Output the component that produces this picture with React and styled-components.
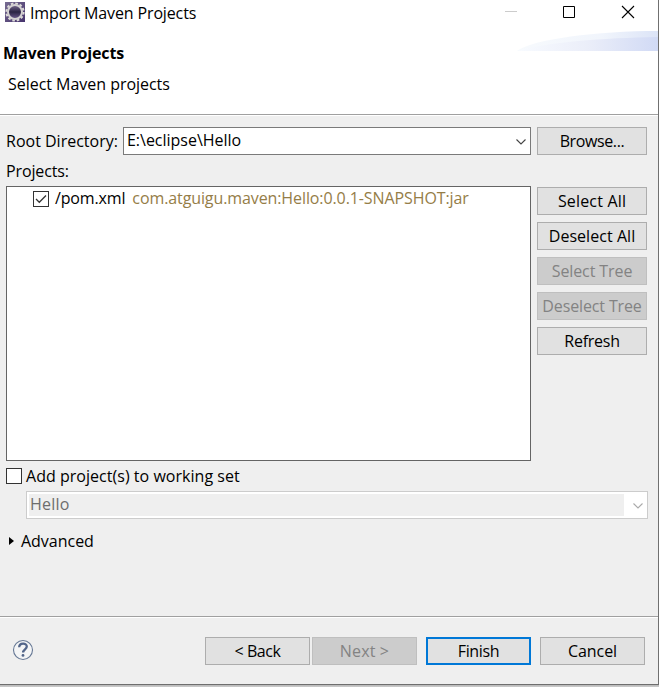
import React from "react";
import styled, { createGlobalStyle, css } from "styled-components";

const Global = createGlobalStyle`
  * { box-sizing: border-box; }
  html, body { margin: 0; overflow: hidden; background: #c8c8c8; }
  body { font: 16px/20px "Open Sans", "Noto Sans", sans-serif; color: #000; }
`;

const Desktop = styled.div`
  width: 659px;
  height: 687px;
  background: linear-gradient(#b8b8b8, #cdcdcd) bottom / 100% 2px no-repeat;
`;

const Dialog = styled.main`
  display: flex;
  flex-direction: column;
  width: 659px;
  height: 685px;
  background: #efefef;
  border-right: 1px solid #707070;
  border-bottom: 1px solid #6e6e6e;
`;

const Label = styled.span`
  white-space: pre;
  letter-spacing: ${(p) => p.$track || 0}px;
  color: ${(p) => p.$color || "inherit"};
`;

const Header = styled.header`
  height: 116px;
  flex: none;
  background: #fff;
  border-bottom: 1px solid #fff;
  box-shadow: inset 0 -1px #a0a0a0;
`;

const TitleBar = styled.div`
  display: flex;
  align-items: flex-start;
  height: 31px;
  padding: 2px 23px 0 5px;
`;

const WindowTitle = styled(Label)`
  margin: 1px 0 0 5px;
  flex: 1;
`;

const WindowControls = styled.div`
  display: flex;
  gap: 45px;
  padding-top: 3px;
`;

const Banner = styled.div`
  display: flex;
  justify-content: space-between;
`;

const BannerText = styled.div`
  display: flex;
  flex-direction: column;
  padding: 12px 0 0 3px;
`;

const Heading = styled.h1`
  margin: 0;
  font-size: 16px;
  line-height: 20px;
  letter-spacing: -0.11px;
`;

const Subheading = styled(Label)`
  margin: 11px 0 0 5px;
`;

const Content = styled.section`
  flex: 1;
  padding: 11px 10px 0 6px;
`;

const RootRow = styled.div`
  display: grid;
  grid-template-columns: 117px 408px 110px;
  align-items: center;
  & > :last-child { margin-left: 6px; }
`;

const ComboBox = styled.div`
  display: flex;
  align-items: center;
  justify-content: space-between;
  height: 28px;
  padding: 0 4px 2px 3px;
  background: #fff;
  border: 1px solid #7a7a7a;
  & > svg { margin-top: 3px; }
`;

const DisabledCombo = styled.div`
  display: flex;
  align-items: center;
  justify-content: space-between;
  width: 622px;
  height: 28px;
  margin: 5px 0 0 20px;
  padding: 2px 4px 2px 2px;
  background: #fff;
  border: 1px solid #ccc;
  & > svg { margin-top: 1px; }
`;

const DisabledValue = styled.div`
  width: 595px;
  height: 22px;
  padding-left: 1px;
  background: #efefef;
  color: #6d6d6d;
`;

const ProjectsLabel = styled.div`
  height: 31px;
  padding-top: 6px;
`;

const ProjectsArea = styled.div`
  display: flex;
  gap: 6px;
`;

const Tree = styled.div`
  width: 525px;
  height: 275px;
  padding: 1px 0 0 26px;
  background: #fff;
  border: 1px solid #646464;
`;

const TreeItem = styled.div`
  display: flex;
  align-items: flex-start;
`;

const ItemName = styled(Label)`
  margin: 0 7px 0 6px;
`;

const Checkbox = styled.span`
  display: flex;
  align-items: center;
  justify-content: center;
  flex: none;
  width: 16px;
  height: 16px;
  background: #fff;
  border: 1px solid #333;
`;

const ItemCheckbox = styled(Checkbox)`
  margin-top: 3px;
`;

const SideButtons = styled.div`
  display: flex;
  flex-direction: column;
  gap: 7px;
  padding-top: 1px;
`;

const Button = styled.button`
  display: flex;
  align-items: center;
  justify-content: center;
  width: ${(p) => p.$width || 110}px;
  height: 28px;
  padding: 0;
  font: inherit;
  color: #000;
  background: #e1e1e1;
  border: 1px solid #adadad;
  border-radius: 0;
  ${(p) => p.$primary && css`
    border: 2px solid #0078d7;
  `}
  &:disabled {
    color: #838383;
    background: #ccc;
    border-color: #bfbfbf;
  }
`;

const WorkingSet = styled.div`
  display: flex;
  align-items: center;
  gap: 4px;
  margin-top: 5px;
`;

const Advanced = styled.div`
  display: flex;
  align-items: center;
  gap: 7px;
  margin: 12px 0 0 3px;
`;

const Footer = styled.footer`
  display: flex;
  height: 68px;
  flex: none;
  padding: 19px 13px 0 12px;
  border-top: 1px solid #a0a0a0;
  box-shadow: inset 0 1px #fff;
  & > svg { margin-top: 3px; }
`;

const Navigation = styled.div`
  display: flex;
  gap: 2px;
  margin: 1px 9px 0 auto;
`;

const Actions = styled.div`
  display: flex;
  gap: 9px;
  margin-top: 1px;
`;

const AppIcon = () => (
  <svg width="20" height="20" viewBox="0 0 20 20">
    <defs>
      <linearGradient id="purple" x1="0" y1="0" x2="1" y2="1">
        <stop offset="0" stopColor="#776c91" />
        <stop offset="1" stopColor="#46336d" />
      </linearGradient>
      <linearGradient id="core" x1="0" y1="0" x2="0" y2="1">
        <stop offset="0" stopColor="#77688f" />
        <stop offset=".5" stopColor="#2b2444" />
        <stop offset="1" stopColor="#6e5b90" />
      </linearGradient>
    </defs>
    <path fill="url(#purple)" d="M0 0h20v20H0z" />
    <circle cx="10" cy="10" r="8.6" fill="none" stroke="#dddbd8" strokeWidth="2" strokeDasharray="2.6 1.903" />
    <circle cx="10" cy="10" r="7" fill="url(#core)" stroke="#d3d0d1" strokeWidth="2" />
  </svg>
);

const Swoosh = () => (
  <svg width="141" height="20" viewBox="0 0 141 20">
    <defs>
      <linearGradient id="wave">
        <stop offset="0" stopColor="#f8fbff" />
        <stop offset=".5" stopColor="#ebeef9" />
        <stop offset="1" stopColor="#d1daf5" />
      </linearGradient>
      <linearGradient id="crest">
        <stop offset="0" stopColor="#f7fafd" />
        <stop offset=".6" stopColor="#f1f5fc" />
        <stop offset="1" stopColor="#dce4f7" />
      </linearGradient>
    </defs>
    <path fill="url(#crest)" d="M0 20C16 8 80 0 141 0V20z" />
    <path fill="url(#wave)" d="M0 20C30 11 85 7 141 6V20z" />
  </svg>
);

const Chevron = ({ color }) => (
  <svg width="10" height="6" viewBox="0 0 10 6">
    <path fill="none" stroke={color} strokeWidth="1.1" d="M.5.5 5 5 9.5.5" />
  </svg>
);

const HelpIcon = () => (
  <svg width="22" height="22" viewBox="0 0 22 22">
    <circle cx="11" cy="11" r="9.5" fill="#f4f5f6" stroke="#667895" strokeWidth="1.1" />
    <path fill="none" stroke="#53668a" strokeWidth="2.3" d="M7.2 8.2C7.2 3.6 15 3.6 14.8 7.6c0 2.7-3.7 2.9-3.7 6" />
    <circle cx="11" cy="16.4" r="1.4" fill="#53668a" />
  </svg>
);

const sideButtons = [
  { text: "Select All", track: 0.17 },
  { text: "Deselect All", track: 0.05 },
  { text: "Select Tree", track: -0.1, disabled: true },
  { text: "Deselect Tree", track: -0.13, disabled: true },
  { text: "Refresh", track: -0.25 },
];

export default function App() {
  return (
    <Desktop>
      <Global />
      <Dialog>
        <Header>
          <TitleBar>
            <AppIcon />
            <WindowTitle $track={-0.14}>Import Maven Projects</WindowTitle>
            <WindowControls>
              <svg width="14" height="14"><path stroke="#ccc" d="M2 6.5h12" /></svg>
              <svg width="14" height="14"><path fill="none" stroke="#000" d="M1.5 1.5h11v11h-11z" /></svg>
              <svg width="14" height="14"><path stroke="#000" strokeWidth="1.1" d="m1 1 12 12M13 1 1 13" /></svg>
            </WindowControls>
          </TitleBar>
          <Banner>
            <BannerText>
              <Heading>Maven Projects</Heading>
              <Subheading $track={-0.03}>Select Maven projects</Subheading>
            </BannerText>
            <Swoosh />
          </Banner>
        </Header>
        <Content>
          <RootRow>
            <Label>Root Directory:</Label>
            <ComboBox>
              <Label $track={-0.02}>E:\eclipse\Hello</Label>
              <Chevron color="#444" />
            </ComboBox>
            <Button><Label $track={-0.38}>Browse...</Label></Button>
          </RootRow>
          <ProjectsLabel><Label $track={-0.13}>Projects:</Label></ProjectsLabel>
          <ProjectsArea>
            <Tree>
              <TreeItem>
                <ItemCheckbox>
                  <svg width="12" height="10" viewBox="0 0 12 10">
                    <path fill="none" stroke="#333" strokeWidth="1.3" d="m1 5 3.3 3.3L11 1.5" />
                  </svg>
                </ItemCheckbox>
                <ItemName $track={-0.15}>/pom.xml</ItemName>
                <Label $track={-0.1} $color="#957d47">com.atguigu.maven:Hello:0.0.1-SNAPSHOT:jar</Label>
              </TreeItem>
            </Tree>
            <SideButtons>
              {sideButtons.map(({ text, track, disabled }) => (
                <Button key={text} disabled={disabled}><Label $track={track}>{text}</Label></Button>
              ))}
            </SideButtons>
          </ProjectsArea>
          <WorkingSet>
            <Checkbox />
            <Label $track={0.03}>Add project(s) to working set</Label>
          </WorkingSet>
          <DisabledCombo>
            <DisabledValue><Label $track={0.2}>Hello</Label></DisabledValue>
            <Chevron color="#aaa" />
          </DisabledCombo>
          <Advanced>
            <svg width="5" height="8"><path d="M0 0 5 4 0 8z" /></svg>
            <Label $track={-0.02}>Advanced</Label>
          </Advanced>
        </Content>
        <Footer>
          <HelpIcon />
          <Navigation>
            <Button $width={105}><Label $track={-0.4}>{"< Back"}</Label></Button>
            <Button $width={105} disabled><Label $track={0.14}>{"Next >"}</Label></Button>
          </Navigation>
          <Actions>
            <Button $width={105} $primary><Label $track={-0.36}>Finish</Label></Button>
            <Button $width={105}><Label $track={-0.08}>Cancel</Label></Button>
          </Actions>
        </Footer>
      </Dialog>
    </Desktop>
  );
}
